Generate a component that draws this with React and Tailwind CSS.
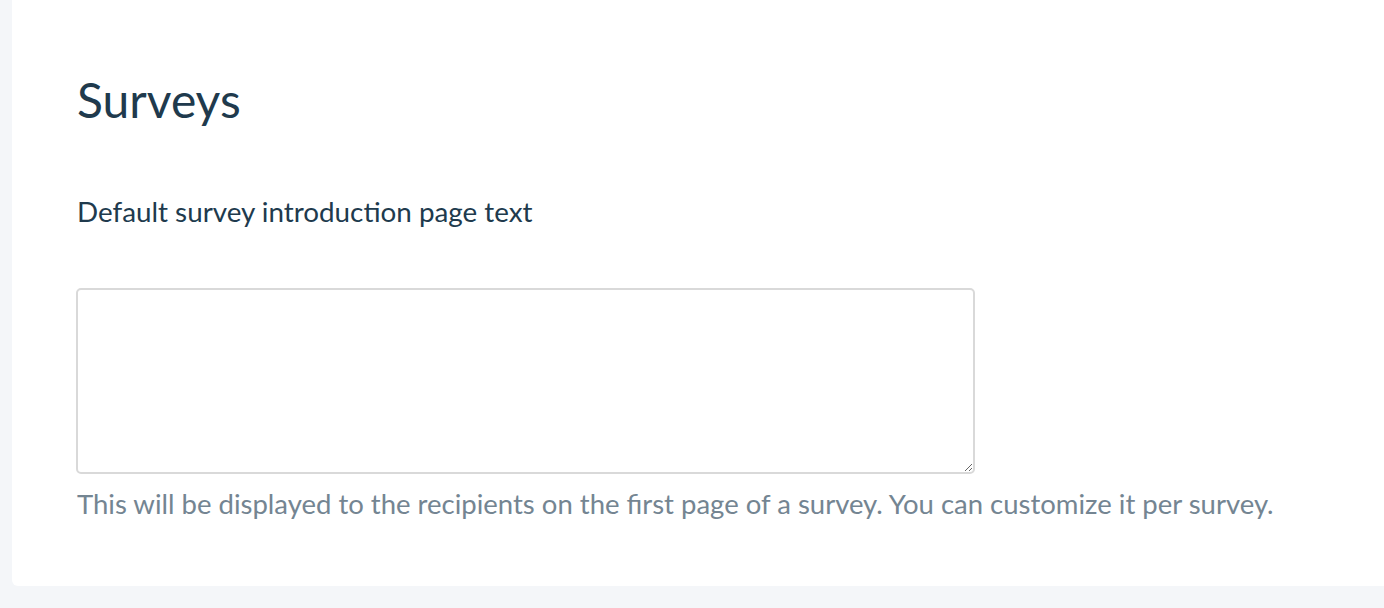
import React from 'react';

function App() {
  return (
    <div className="min-h-screen w-full bg-[#f4f6f9] overflow-hidden" style={{ fontFamily: 'Lato, "Open Sans", sans-serif' }}>
      <div className="h-[608px] pl-3 pb-[22px] flex flex-col">
        <div className="flex-1 bg-white rounded-bl-md pl-[64px] pt-[72px]">
          <h1 className="pl-px text-[48px] leading-[56px] text-[#203a4d] font-normal">Surveys</h1>

          <label className="block pl-px mt-[68px] text-[27.8px] leading-[32px] text-[#203a4d]">
            Default survey introduction page text
          </label>

          <textarea
            className="block mt-[60px] w-[899px] h-[186px] border-2 border-[#d9d9d9] rounded-[5px] bg-white outline-none"
          />

          <p className="pl-px mt-[14px] text-[27.5px] leading-[32px] text-[#748592]">
            This will be displayed to the recipients on the first page of a survey. You can customize it per survey.
          </p>
        </div>
      </div>
    </div>
  );
}

export default App;
